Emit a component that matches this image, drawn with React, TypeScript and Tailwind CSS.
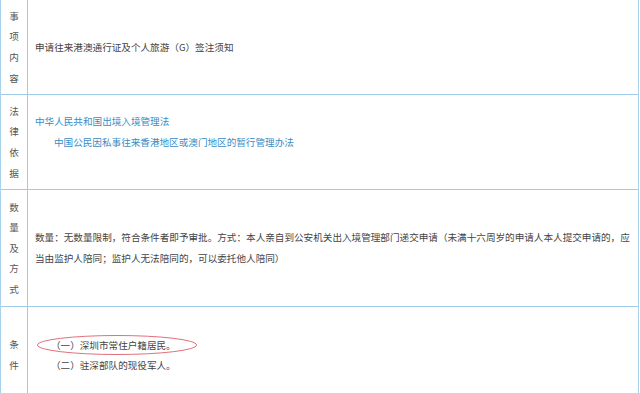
import React from 'react';

const font = { fontFamily: '"Noto Sans CJK SC", "Noto Sans", sans-serif' };

const Label = ({ chars }: { chars: string }) => (
  <div className="w-[27px] shrink-0 border-r border-[#9fcde9] flex flex-col items-center justify-center text-[9.6px] leading-[20.6px] text-[#555]">
    {chars.split('').map((c, i) => (
      <span key={i}>{c}</span>
    ))}
  </div>
);

export default function App() {
  return (
    <div className="w-[640px] h-[393px] overflow-hidden bg-white" style={font}>
      <div className="w-[639px] border-l border-r border-[#a9d3ec] relative">
        <div className="flex h-[95px] border-b border-[#9fcde9]">
          <Label chars="事项内容" />
          <div className="flex-1 flex items-center pl-[7px] text-[9.6px] text-[#444]">
            申请往来港澳通行证及个人旅游（G）签注须知
          </div>
        </div>

        <div className="flex h-[95px] border-b border-[#9fcde9]">
          <Label chars="法律依据" />
          <div className="flex-1 flex flex-col justify-center pl-[7px] text-[9.6px] leading-[21px] text-[#3a8cc6]">
            <p>中华人民共和国出境入境管理法</p>
            <p className="pl-[19px]">中国公民因私事往来香港地区或澳门地区的暂行管理办法</p>
            <p>&nbsp;</p>
          </div>
        </div>

        <div className="flex h-[117px] border-b border-[#9fcde9]">
          <Label chars="数量及方式" />
          <div className="flex-1 flex items-center pl-[7px] pr-[4px] text-[9.6px] leading-[21px] text-[#444]">
            <p>
              数量：无数量限制，符合条件者即予审批。方式：本人亲自到公安机关出入境管理部门递交申请（未满十六周岁的申请人本人提交申请的，应当由监护人陪同；监护人无法陪同的，可以委托他人陪同）
            </p>
          </div>
        </div>

        <div className="flex h-[96px]">
          <Label chars="条件" />
          <div className="flex-1 flex flex-col justify-center pl-[23px] text-[9.6px] leading-[20px] text-[#444]">
            <p>（一）深圳市常住户籍居民。</p>
            <p>（二）驻深部队的现役军人。</p>
          </div>
        </div>

        <svg className="absolute left-[35px] top-[334px] pointer-events-none" width="162" height="22" viewBox="0 0 162 22">
          <ellipse cx="81" cy="11" rx="79.5" ry="9.5" fill="none" stroke="#e0707c" strokeWidth="1" />
        </svg>
      </div>
    </div>
  );
}
